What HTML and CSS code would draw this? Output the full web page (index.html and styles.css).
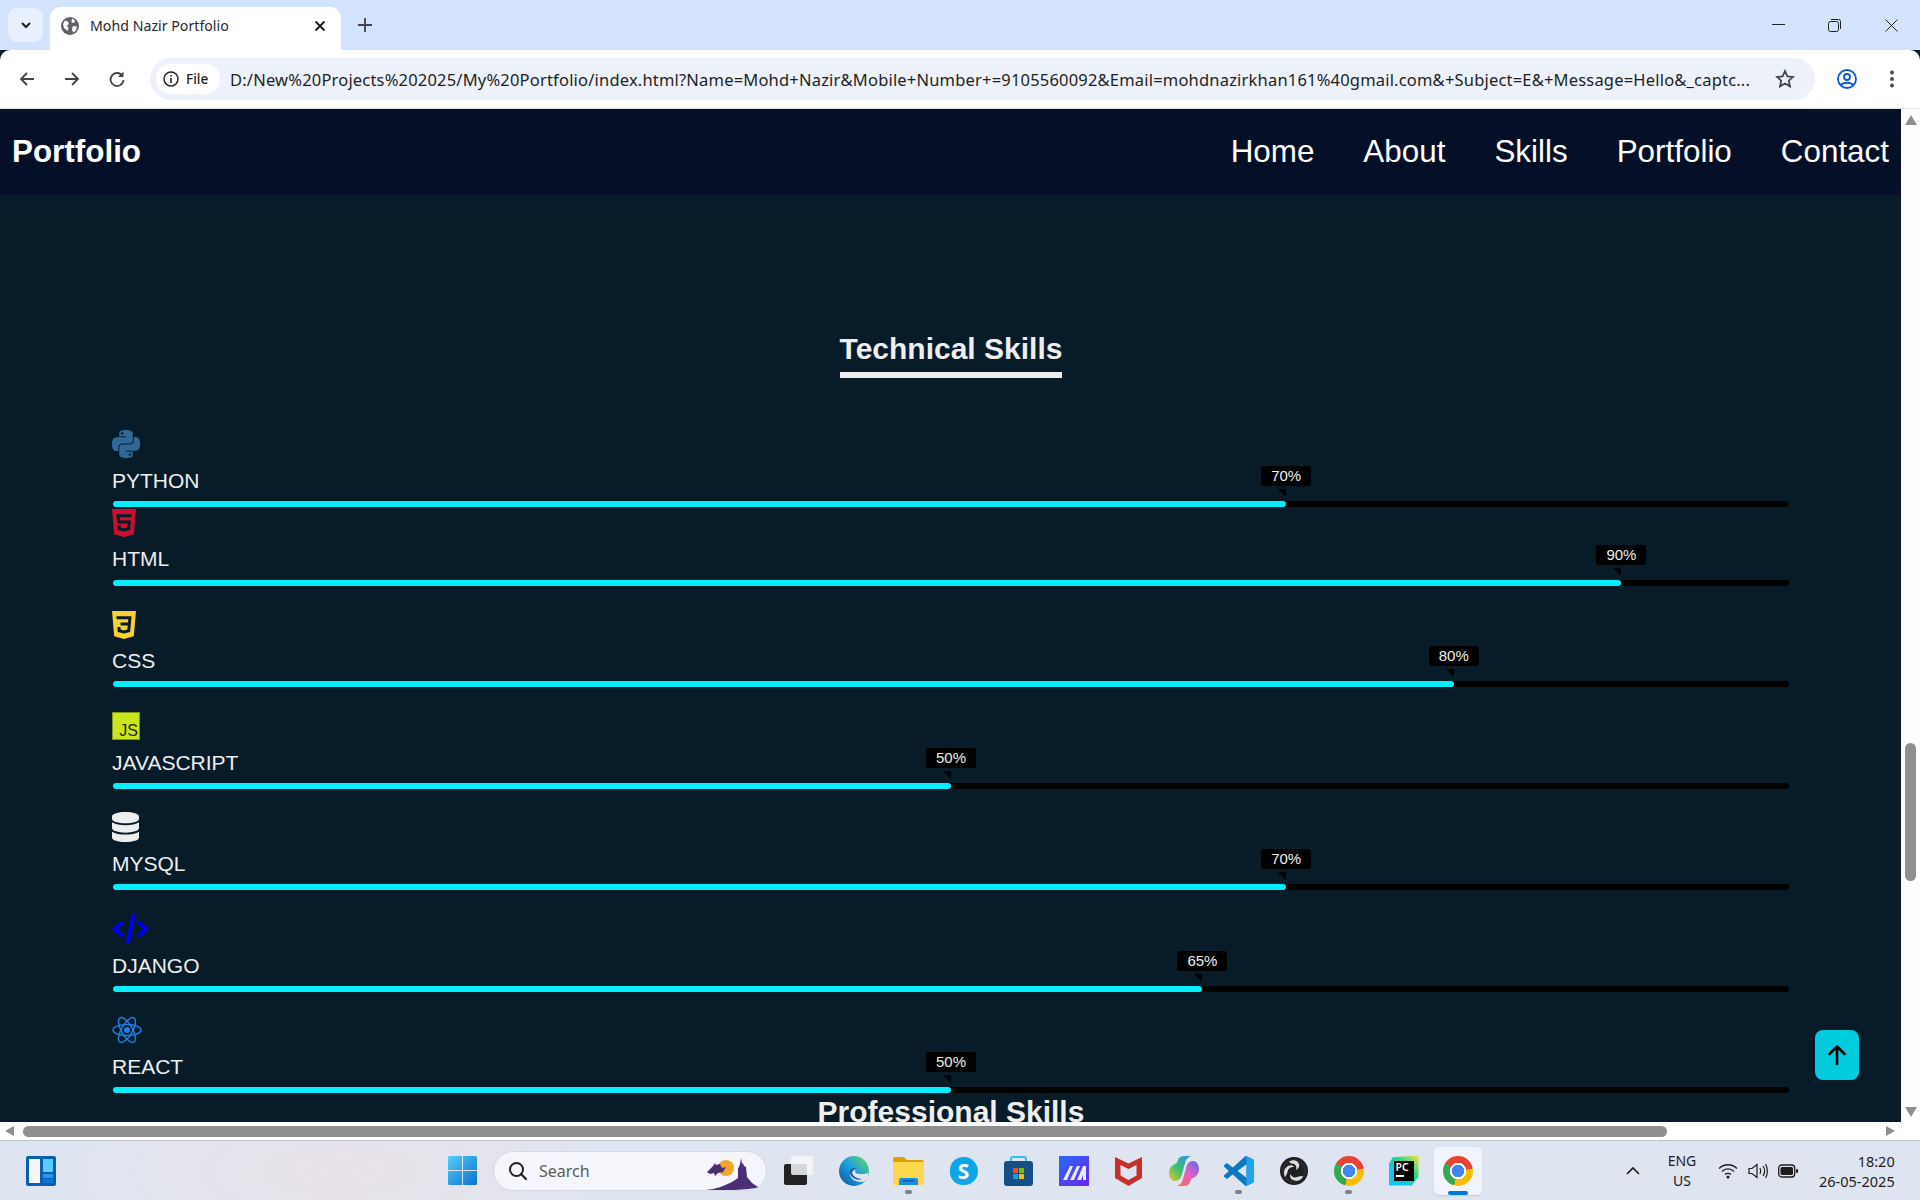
FILE: index.html
```html
<!DOCTYPE html>
<html lang="en">
  <head>
    <meta charset="UTF-8" />
    <meta name="viewport" content="width=device-width, initial-scale=1.0" />
    <title>Mohd Nazir Portfolio</title>
    <link rel="stylesheet" href="styles.css">
  </head>
  <body>
    <div class="tabstrip">
      <div class="tab-search">
        <svg width="12" height="12" viewBox="0 0 12 12"><path d="M2 4l4 4 4-4" fill="none" stroke="#1f1f1f" stroke-width="2"/></svg>
      </div>
      <div class="tab">
        <svg class="tab-favicon" width="18" height="18" viewBox="0 0 18 18">
          <circle cx="9" cy="9" r="9" fill="#5f6368"/>
          <path d="M4 3.500l3 1 1 2.500-2 1.500 1.500 2.500-1 3-3.500-3-1-4zM11 1.500l3 2-1 2.500-2.500-.5zM12 9l4 .5-1.500 4.500-2.500 1.500-1-3.500z" fill="#fff"/>
        </svg>
        <span class="tab-title">Mohd Nazir Portfolio</span>
        <svg class="tab-close" width="12" height="12" viewBox="0 0 12 12"><path d="M1.500 1.500l9 9M10.500 1.500l-9 9" stroke="#1f1f1f" stroke-width="2"/></svg>
      </div>
      <svg class="tab-new" width="14" height="14" viewBox="0 0 14 14"><path d="M7 0v14M0 7h14" stroke="#444" stroke-width="1.800"/></svg>
      <div class="window-controls">
        <svg width="13" height="13" viewBox="0 0 13 13"><path d="M0 5.500h13" stroke="#222" stroke-width="1"/></svg>
        <svg width="13" height="13" viewBox="0 0 13 13"><rect x=".5" y="2.500" width="10" height="10" rx="2" fill="none" stroke="#222"/><path d="M3 .5h7.500a2 2 0 0 1 2 2V10" fill="none" stroke="#222"/></svg>
        <svg width="13" height="13" viewBox="0 0 13 13"><path d="M.5.5l12 12M12.500.5l-12 12" stroke="#222" stroke-width="1"/></svg>
      </div>
    </div>

    <div class="toolbar">
      <svg class="tool-icon" width="18" height="18" viewBox="0 0 18 18"><path d="M16 9H3M9 3L3 9l6 6" fill="none" stroke="#444" stroke-width="1.800"/></svg>
      <svg class="tool-icon" width="18" height="18" viewBox="0 0 18 18"><path d="M2 9h13M9 3l6 6-6 6" fill="none" stroke="#444" stroke-width="1.800"/></svg>
      <svg class="tool-icon" width="18" height="18" viewBox="0 0 18 18"><path d="M14.500 6A6.500 6.500 0 1 0 15.500 10" fill="none" stroke="#444" stroke-width="1.800"/><path d="M15.500 1.500v5.500H10z" fill="#444"/></svg>
      <div class="omnibox">
        <div class="file-chip">
          <svg width="16" height="16" viewBox="0 0 16 16"><circle cx="8" cy="8" r="7" fill="none" stroke="#222" stroke-width="1.500"/><path d="M8 7v5M8 4v1.600" stroke="#222" stroke-width="1.600"/></svg>
          <span>File</span>
        </div>
        <div class="url">D:/New%20Projects%202025/My%20Portfolio/index.html?Name=Mohd+Nazir&amp;Mobile+Number+=9105560092&amp;Email=mohdnazirkhan161%40gmail.com&amp;+Subject=E&amp;+Message=Hello&amp;_captc...</div>
        <svg class="star" width="20" height="20" viewBox="0 0 20 20"><path d="M10 2l2.400 5.300 5.600.6-4.200 3.800 1.200 5.700-5-2.900-5 2.900 1.200-5.700L2 7.900l5.600-.6z" fill="none" stroke="#444" stroke-width="1.800"/></svg>
      </div>
      <svg class="profile" width="20" height="20" viewBox="0 0 20 20"><circle cx="10" cy="10" r="9" fill="none" stroke="#0b57d0" stroke-width="1.800"/><circle cx="10" cy="8" r="3" fill="none" stroke="#0b57d0" stroke-width="1.800"/><path d="M4 16c2-3 10-3 12 0" fill="none" stroke="#0b57d0" stroke-width="1.800"/></svg>
      <svg class="more" width="6" height="18" viewBox="0 0 6 18"><circle cx="3" cy="2.500" r="1.900" fill="#444"/><circle cx="3" cy="9" r="1.900" fill="#444"/><circle cx="3" cy="15.500" r="1.900" fill="#444"/></svg>
    </div>

    <div class="viewport">
      <div class="page">
        <div class="navbar">
          <div class="logo">Portfolio</div>
          <div class="nav-links">
            <a href="#home">Home</a>
            <a href="#about">About</a>
            <a href="#skills">Skills</a>
            <a href="#portfolio">Portfolio</a>
            <a href="#contact">Contact</a>
          </div>
        </div>

        <div class="skills-section">
          <h2 class="section-title">Technical Skills</h2>

          <div class="skill">
            <svg class="skill-icon icon-python" viewBox="0 0 24 24"><path fill="#306998" d="M14.250.18l.9.2.73.26.59.3.45.32.34.34.25.34.16.33.1.3.04.26.02.2-.01.13V8.500l-.05.63-.13.55-.21.46-.26.38-.3.31-.33.25-.35.19-.35.14-.33.1-.3.07-.26.04-.21.02H8.770l-.69.05-.59.14-.5.22-.41.27-.33.32-.27.35-.2.36-.15.37-.1.35-.07.32-.04.27-.02.21v3.060H3.170l-.21-.03-.28-.07-.32-.12-.35-.18-.36-.26-.36-.36-.35-.46-.32-.59-.28-.73-.21-.88-.14-1.050-.05-1.230.06-1.220.16-1.040.24-.87.32-.71.36-.57.4-.44.42-.33.42-.24.4-.16.36-.1.32-.05.24-.01h.16l.06.01h8.160v-.83H6.180l-.01-2.750-.02-.37.05-.34.11-.31.17-.28.25-.26.31-.23.38-.2.44-.18.51-.15.58-.12.64-.1.71-.06.77-.04.84-.02 1.270.05zm-6.300 1.980l-.23.33-.08.41.08.41.23.34.33.22.41.09.41-.09.33-.22.23-.34.08-.41-.08-.41-.23-.33-.33-.22-.41-.09-.41.09zm13.090 3.950l.28.06.32.12.35.18.36.27.36.35.35.47.32.59.28.73.21.88.14 1.040.05 1.230-.06 1.230-.16 1.040-.24.86-.32.71-.36.57-.4.45-.42.33-.42.24-.4.16-.36.09-.32.05-.24.02-.16-.01h-8.220v.82h5.840l.01 2.760.02.36-.05.34-.11.31-.17.29-.25.25-.31.24-.38.2-.44.17-.51.15-.58.13-.64.09-.71.07-.77.04-.84.01-1.270-.04-1.070-.14-.9-.2-.73-.25-.59-.3-.45-.33-.34-.34-.25-.34-.16-.33-.1-.3-.04-.25-.02-.2.01-.13v-5.340l.05-.64.13-.54.21-.46.26-.38.3-.32.33-.24.35-.2.35-.14.33-.1.3-.06.26-.04.21-.02.13-.01h5.840l.69-.05.59-.14.5-.21.41-.28.33-.32.27-.35.2-.36.15-.36.1-.35.07-.32.04-.28.02-.21V6.070h2.090l.14.01zm-6.470 14.250l-.23.33-.08.41.08.41.23.33.33.23.41.08.41-.08.33-.23.23-.33.08-.41-.08-.41-.23-.33-.33-.23-.41-.08-.41.08z"/></svg>
            <div class="skill-name">PYTHON</div>
            <div class="bar"><div class="bar-fill" style="width: 70%"><span class="bar-tip">70%</span></div></div>
          </div>

          <div class="skill skill-tight">
            <svg class="skill-icon icon-html" viewBox="1.500 0 21 24" preserveAspectRatio="none"><path fill="#c9102f" d="M1.500 0h21l-1.910 21.563L11.977 24l-8.564-2.438L1.500 0zm7.031 9.750l-.232-2.718 10.059.003.23-2.622L5.412 4.410l.698 8.010h9.126l-.326 3.426-2.910.804-2.955-.81-.188-2.110H6.248l.33 4.171L12 19.351l5.379-1.443.744-8.157H8.531z"/></svg>
            <div class="skill-name">HTML</div>
            <div class="bar"><div class="bar-fill" style="width: 90%"><span class="bar-tip">90%</span></div></div>
          </div>

          <div class="skill">
            <svg class="skill-icon icon-css" viewBox="1.500 0 21 24" preserveAspectRatio="none"><path fill="#f9d030" d="M1.500 0h21l-1.910 21.563L11.977 24l-8.565-2.438L1.500 0zm17.090 4.413L5.410 4.410l.213 2.622 10.125.002-.255 2.716h-6.640l.24 2.573h6.182l-.366 3.523-2.910.804-2.956-.81-.188-2.110h-2.610l.33 4.171L12 19.351l5.379-1.443.744-8.157z"/></svg>
            <div class="skill-name">CSS</div>
            <div class="bar"><div class="bar-fill" style="width: 80%"><span class="bar-tip">80%</span></div></div>
          </div>

          <div class="skill">
            <div class="skill-icon icon-js"><span>JS</span></div>
            <div class="skill-name">JAVASCRIPT</div>
            <div class="bar"><div class="bar-fill" style="width: 50%"><span class="bar-tip">50%</span></div></div>
          </div>

          <div class="skill">
            <svg class="skill-icon icon-db" viewBox="0 0 448 512" preserveAspectRatio="none"><path fill="#eee" d="M448 73.143v45.714C448 159.143 347.667 192 224 192S0 159.143 0 118.857V73.143C0 32.857 100.333 0 224 0s224 32.857 224 73.143zM448 176v102.857C448 319.143 347.667 352 224 352S0 319.143 0 278.857V176c48.125 33.143 136.208 48.572 224 48.572S399.874 209.143 448 176zm0 160v102.857C448 479.143 347.667 512 224 512S0 479.143 0 438.857V336c48.125 33.143 136.208 48.572 224 48.572S399.874 369.143 448 336z"/></svg>
            <div class="skill-name">MYSQL</div>
            <div class="bar"><div class="bar-fill" style="width: 70%"><span class="bar-tip">70%</span></div></div>
          </div>

          <div class="skill">
            <svg class="skill-icon icon-code" viewBox="0 0 37 30"><path d="M10 9l-7.500 6 7.500 6M27 9l7.500 6-7.500 6M21.500 2l-5.500 26" fill="none" stroke="#0000f5" stroke-width="4" stroke-linecap="round" stroke-linejoin="round"/></svg>
            <div class="skill-name">DJANGO</div>
            <div class="bar"><div class="bar-fill" style="width: 65%"><span class="bar-tip">65%</span></div></div>
          </div>

          <div class="skill">
            <svg class="skill-icon icon-react" viewBox="0 0 30 28"><g fill="none" stroke="#1a80e5" stroke-width="1.500"><ellipse cx="15" cy="14" rx="14" ry="5.500"/><ellipse cx="15" cy="14" rx="14" ry="5.500" transform="rotate(60 15 14)"/><ellipse cx="15" cy="14" rx="14" ry="5.500" transform="rotate(120 15 14)"/></g><circle cx="15" cy="14" r="3" fill="#1a80e5"/></svg>
            <div class="skill-name">REACT</div>
            <div class="bar"><div class="bar-fill" style="width: 50%"><span class="bar-tip">50%</span></div></div>
          </div>

          <h2 class="next-title">Professional Skills</h2>
        </div>

        <a class="back-top" href="#home">
          <svg width="20" height="22" viewBox="0 0 20 22"><path d="M10 20V3M2.500 10L10 2.500l7.500 7.500" fill="none" stroke="#000" stroke-width="2.600" stroke-linecap="round" stroke-linejoin="round"/></svg>
        </a>
      </div>

      <div class="vscroll">
        <div class="arrow-up"></div>
        <div class="vthumb"></div>
        <div class="arrow-down"></div>
      </div>
    </div>

    <div class="hscroll">
      <div class="arrow-left"></div>
      <div class="hthumb"></div>
      <div class="arrow-right"></div>
    </div>

    <div class="taskbar">
      <svg class="widgets" width="30" height="30" viewBox="0 0 30 30"><rect width="30" height="30" rx="2" fill="#0a5fb4"/><rect x="3" y="3" width="11" height="24" fill="#f4f6fa"/><rect x="17" y="3" width="10" height="13" fill="#56cdfb"/><rect x="17" y="18" width="10" height="4" fill="#1b9de8"/><rect x="17" y="23" width="10" height="4" fill="#0d74d1"/></svg>

      <svg class="win-logo" width="29" height="29" viewBox="0 0 29 29">
        <defs><linearGradient id="winblue" x1="0" y1="0" x2="1" y2="1"><stop offset="0" stop-color="#52cffb"/><stop offset="1" stop-color="#0a6fd0"/></linearGradient></defs>
        <path d="M0 1.500A1.500 1.500 0 0 1 1.500 0H14v14H0zM15 0h12.500A1.500 1.500 0 0 1 29 1.500V14H15zM0 15h14v14H1.500A1.500 1.500 0 0 1 0 27.500zM15 15h14v12.500a1.500 1.500 0 0 1-1.500 1.500H15z" fill="url(#winblue)"/>
      </svg>

      <div class="task-search">
        <svg width="20" height="20" viewBox="0 0 20 20"><circle cx="8.500" cy="8.500" r="6.500" fill="none" stroke="#222" stroke-width="2"/><path d="M13 13l5 5" stroke="#222" stroke-width="2.200" stroke-linecap="round"/></svg>
        <span>Search</span>
        <svg class="search-art" width="52" height="34" viewBox="0 0 52 34">
          <path d="M0 33c10-1 18-4 26-8l6-4V12l2-5 1-6 1 6 1-1 1 3 2 1 1 10 5 6 6 4c-3 2-14 2-24 3z" fill="#4b2e73"/>
          <circle cx="20" cy="11" r="8" fill="#f0a62f"/>
          <path d="M1 15l6-6 2-3 1 2 4-1 2 4 4-1-3 5-5 1-3 3-1-3-4 1z" fill="#4b2e73"/>
        </svg>
      </div>

      <div class="task-apps">
        <div class="task-slot">
          <svg width="29" height="29" viewBox="0 0 29 29"><rect y="8" width="23" height="21" rx="2" fill="#222"/><rect x="7" width="22" height="19" rx="2" fill="#f6f7f9" fill-opacity=".85"/></svg>
        </div>
        <div class="task-slot">
          <svg width="30" height="30" viewBox="0 0 30 30">
            <defs><linearGradient id="edge" x1="0" y1="1" x2="1" y2="0"><stop offset="0" stop-color="#0b53a0"/><stop offset=".5" stop-color="#1b9de2"/><stop offset="1" stop-color="#6fdc5a"/></linearGradient></defs>
            <circle cx="15" cy="15" r="15" fill="url(#edge)"/>
            <path d="M29 17c-1 1-6 1-9 1-2 0-4-1-4-3 0-1 1-2 3-2-4-1-8 1-8 5 0 5 6 8 11 8 3 0 6-2 7-5z" fill="#dfe5f0"/>
            <path d="M19 13c-3 0-5 1-6 3 0 4 5 7 10 7-5 2-11-1-12-6-.5-4 4-6 8-4z" fill="#0d5aa7"/>
          </svg>
        </div>
        <div class="task-slot">
          <svg width="31" height="28" viewBox="0 0 31 28"><path d="M0 2a2 2 0 0 1 2-2h9l3 3h15a2 2 0 0 1 2 2v3H0z" fill="#e0a100"/><path d="M0 5h31v21a2 2 0 0 1-2 2H2a2 2 0 0 1-2-2z" fill="#fdd74f"/><path d="M6 23a2 2 0 0 1 2-2h15a2 2 0 0 1 2 2v5H6z" fill="#1a8de0"/><rect x="10" y="23" width="11" height="1.500" fill="#0b5cab"/></svg>
          <i class="task-dot"></i>
        </div>
        <div class="task-slot">
          <div class="skype-logo"><span>S</span></div>
        </div>
        <div class="task-slot">
          <svg width="29" height="30" viewBox="0 0 29 30"><path d="M7 6V3a2 2 0 0 1 2-2h11a2 2 0 0 1 2 2v3" fill="none" stroke="#2bc0ef" stroke-width="2"/><path d="M0 8a3 3 0 0 1 3-3h23a3 3 0 0 1 3 3v19a3 3 0 0 1-3 3H3a3 3 0 0 1-3-3z" fill="#144f85"/><rect x="9" y="12" width="5" height="5" fill="#f25022"/><rect x="15" y="12" width="5" height="5" fill="#7fba00"/><rect x="9" y="18" width="5" height="5" fill="#00a4ef"/><rect x="15" y="18" width="5" height="5" fill="#ffb900"/></svg>
        </div>
        <div class="task-slot">
          <svg width="30" height="30" viewBox="0 0 30 30">
            <defs><linearGradient id="mapp" x1="0" y1="0" x2="1" y2="1"><stop offset="0" stop-color="#2a6cf5"/><stop offset="1" stop-color="#6a22f0"/></linearGradient></defs>
            <rect width="30" height="30" fill="url(#mapp)"/>
            <path d="M4 24L11 10h3L8 24zM11 24l7-14h3l-6 14zM18 24l6-14h3v14h-3v-5l-2 5z" fill="#e8ebfb"/>
          </svg>
        </div>
        <div class="task-slot">
          <svg width="27" height="30" viewBox="0 0 27 30"><path d="M0 1l13.500 6.500L27 1v21l-13.500 8L0 22zM5.500 9v10.500l8 4.500 8-4.500V9l-8 4z" fill="#c5302b" fill-rule="evenodd"/></svg>
        </div>
        <div class="task-slot">
          <svg width="30" height="30" viewBox="0 0 30 30">
            <defs>
              <linearGradient id="cop1" x1="0" y1="1" x2="1" y2="0"><stop offset="0" stop-color="#f6c02d"/><stop offset=".45" stop-color="#39c36f"/><stop offset="1" stop-color="#2c8fe8"/></linearGradient>
              <linearGradient id="cop2" x1="0" y1="1" x2="1" y2="0"><stop offset="0" stop-color="#f5723a"/><stop offset=".5" stop-color="#e45fc0"/><stop offset="1" stop-color="#5b6be8"/></linearGradient>
            </defs>
            <path d="M21 26c-1 3-3 4-6 4H8c3-1 5-3 6-7l3-11c1-4 3-7 7-7h1c3 1 5 4 5 8 0 5-3 8-6 9-2 1-2 2-3 4z" fill="url(#cop2)"/>
            <path d="M9 4c1-3 3-4 6-4h7c-3 1-5 3-6 7l-3 11c-1 4-3 7-7 7H5c-3-1-5-4-5-8 0-5 3-8 6-9 2-1 2-2 3-4z" fill="url(#cop1)"/>
          </svg>
        </div>
        <div class="task-slot">
          <svg width="30" height="30" viewBox="0 0 24 24"><path fill="#0a78c2" d="M23.150 2.587L18.210.21a1.494 1.494 0 0 0-1.705.29l-9.460 8.630-4.120-3.128a.999.999 0 0 0-1.276.057L.327 7.261A1 1 0 0 0 .326 8.740L3.899 12 .326 15.260a1 1 0 0 0 .001 1.479L1.650 17.940a.999.999 0 0 0 1.276.057l4.120-3.128 9.460 8.630a1.492 1.492 0 0 0 1.704.29l4.942-2.377A1.500 1.500 0 0 0 24 20.060V3.939a1.500 1.500 0 0 0-.85-1.352zm-5.146 14.861L10.826 12l7.178-5.448v10.896z"/><path fill="#22a3ee" d="M16.500.5a1.494 1.494 0 0 1 1.710-.29l4.940 2.377A1.500 1.500 0 0 1 24 3.939V20.060a1.500 1.500 0 0 1-.85 1.353l-4.940 2.377a1.492 1.492 0 0 1-1.710-.29c.6.3 1.500 0 1.500-.8V1.300c0-.8-.9-1.100-1.500-.8z"/></svg>
          <i class="task-dot"></i>
        </div>
        <div class="task-slot">
          <svg width="28" height="28" viewBox="0 0 28 28"><circle cx="14" cy="14" r="14" fill="#1f1f22"/><circle cx="14" cy="14" r="11" fill="none" stroke="#2c2c30" stroke-width="2"/><g fill="#dcdcdc"><path d="M9 5c3-3 9-2 10 2 1 3-1 5-3 6 1-3 0-5-2-6-2-.5-3 0-5-2z"/><path d="M23 19c-1 4-6 6-10 4-3-1-3-4-3-6 2 3 4 4 7 3 2-.5 4-1 6-1z"/><path d="M5 20c-2-4-1-9 3-11 2-1 5-1 6 1-3-.5-5 1-6 3-.5 2-1 5-3 7z"/></g></svg>
        </div>
        <div class="task-slot">
          <div class="chrome-logo"></div>
          <i class="task-dot"></i>
        </div>
        <div class="task-slot">
          <div class="pycharm-logo"><div class="pycharm-inner"><span>PC</span><i></i></div></div>
        </div>
        <div class="task-slot task-slot-active">
          <div class="chrome-logo"></div>
          <i class="task-active-bar"></i>
        </div>
      </div>

      <div class="tray">
        <svg class="tray-caret" width="16" height="10" viewBox="0 0 16 10"><path d="M2 8l6-6 6 6" fill="none" stroke="#1c1c1c" stroke-width="1.600"/></svg>
        <div class="tray-lang">ENG<br>US</div>
        <svg class="tray-icon" width="20" height="16" viewBox="0 0 20 16"><path d="M1 5.500c5-5 13-5 18 0M4 8.500c3.500-3.500 8.500-3.500 12 0M7 11.500c1.500-1.500 4.500-1.500 6 0" fill="none" stroke="#1c1c1c" stroke-width="1.300"/><circle cx="10" cy="14" r="1.500" fill="#1c1c1c"/></svg>
        <svg class="tray-icon" width="20" height="16" viewBox="0 0 20 16"><path d="M1 5.500h3L9 1.500v13L4 10.500H1z" fill="none" stroke="#1c1c1c" stroke-width="1.200"/><path d="M12 5c1 2 1 4 0 6M15 3c2 3 2 7 0 10M17.500 1c2.500 4 2.500 10 0 14" fill="none" stroke="#1c1c1c" stroke-width="1.200"/></svg>
        <svg class="tray-icon" width="20" height="14" viewBox="0 0 20 14"><rect x=".7" y="1" width="16" height="12" rx="3" fill="none" stroke="#1c1c1c" stroke-width="1.300"/><rect x="2.500" y="3" width="12.500" height="8" rx="1.500" fill="#1c1c1c"/><rect x="18" y="5" width="2" height="4" rx="1" fill="#1c1c1c"/></svg>
        <div class="tray-clock">18:20<br>26-05-2025</div>
      </div>
    </div>
  </body>
</html>
```

FILE: styles.css
```css
* {
  margin: 0;
  padding: 0;
  box-sizing: border-box;
}

html,
body {
  height: 100%;
  overflow: hidden;
}

body {
  display: flex;
  flex-direction: column;
  height: 100vh;
  font-family: "Liberation Sans", Arial, sans-serif;
  background-color: #071b29;
}

a {
  text-decoration: none;
  color: inherit;
}

/* browser chrome */
.tabstrip {
  height: 50px;
  flex-shrink: 0;
  display: flex;
  align-items: flex-end;
  background-color: #d3e3fd;
  font-family: "Noto Sans", sans-serif;
}

.tab-search {
  width: 35px;
  height: 34px;
  margin: 0 7px 8px 8px;
  border-radius: 9px;
  background-color: #e9f0fd;
  display: flex;
  align-items: center;
  justify-content: center;
}

.tab {
  width: 291px;
  height: 43px;
  border-radius: 11px 11px 0 0;
  background-color: #fff;
  display: flex;
  align-items: center;
  padding: 0 15px 6px 11px;
  position: relative;
}

.tab-favicon {
  margin-right: 11px;
}

.tab-title {
  flex: 1;
  font-size: 14.2px;
  color: #2a2a2a;
}

.tab-new {
  margin: 0 0 18px 17px;
}

.window-controls {
  margin-left: auto;
  height: 50px;
  display: flex;
  align-items: center;
  gap: 43.7px;
  padding-right: 22px;
}

.toolbar {
  height: 59px;
  flex-shrink: 0;
  display: flex;
  align-items: center;
  padding-left: 18px;
  background-color: #fff;
  border-radius: 10px 10px 0 0;
  border-bottom: 1px solid #e2e2e2;
  font-family: "Noto Sans", sans-serif;
}

.tool-icon {
  margin-right: 27px;
}

.omnibox {
  width: 1665px;
  height: 42px;
  margin-left: -3px;
  display: flex;
  align-items: center;
  padding-left: 6px;
  border-radius: 21px;
  background-color: #edf2fa;
}

.file-chip {
  width: 64px;
  height: 30px;
  flex-shrink: 0;
  display: flex;
  align-items: center;
  gap: 7px;
  padding-left: 7px;
  border-radius: 15px;
  background-color: #fff;
  font-size: 13.5px;
  font-weight: 500;
  color: #1f1f1f;
}

.url {
  margin-left: 10px;
  flex: 1;
  white-space: nowrap;
  overflow: hidden;
  font-size: 16.5px;
  letter-spacing: 0.19px;
  color: #1f1f1f;
}

.star {
  margin: 0 20px 0 24px;
  flex-shrink: 0;
}

.profile {
  margin-left: 22px;
}

.more {
  margin-left: 32px;
}

/* page */
.viewport {
  flex: 1;
  display: flex;
  min-height: 0;
}

.page {
  flex: 1;
  position: relative;
  overflow: hidden;
  background-color: #071b29;
}

.navbar {
  height: 86px;
  display: flex;
  align-items: center;
  justify-content: space-between;
  padding: 0 10px 0 12px;
  background-color: #051028;
  color: #fff;
}

.logo {
  font-size: 31.4px;
  font-weight: 700;
}

.nav-links {
  display: flex;
  gap: 49px;
  padding-right: 2px;
  font-size: 31.4px;
}

.skills-section {
  padding: 137px 112px 0 113px;
  color: #eee;
}

.section-title {
  width: fit-content;
  margin: 0 auto 52px;
  padding-bottom: 6px;
  border-bottom: 6px solid #eee;
  font-size: 30px;
}

.skill {
  display: flow-root;
  margin-top: 24.4px;
}

.section-title + .skill {
  margin-top: 0;
}

.skill-tight {
  margin-top: 2px;
}

.skill-icon {
  display: block;
  height: 28px;
  margin-bottom: 11px;
}

.icon-python {
  width: 28px;
  margin-left: -1px;
}

.icon-html {
  width: 24px;
  margin: 0 0 10px -1px;
}

.skill-tight .skill-name {
  margin-bottom: 9px;
}

.icon-css {
  width: 24px;
  margin: 1px 0 10px -1px;
}

.icon-js {
  width: 28px;
  margin-left: -1px;
  display: flex;
  align-items: flex-end;
  justify-content: flex-end;
  padding-right: 1px;
  background-color: #c9e620;
  border: 1px solid #7f9a10;
  color: #1f2808;
  font-size: 16px;
  line-height: 17px;
}

.icon-db {
  width: 27px;
  height: 30px;
  margin: -1px 0 10px -1px;
}

.icon-code {
  width: 37px;
  height: 30px;
  margin: -1px 0 10px -1px;
}

.icon-react {
  width: 30px;
  margin-left: -1px;
}

.skill-name {
  height: 24px;
  margin-left: -1px;
  font-size: 21px;
  line-height: 24px;
  margin-bottom: 8px;
}

.bar {
  height: 6px;
  border-radius: 3px;
  background-color: #000;
}

.bar-fill {
  position: relative;
  height: 100%;
  border-radius: 3px;
  background-color: #00f0ff;
}

.bar-tip {
  position: absolute;
  top: -35px;
  right: -25px;
  width: 50px;
  height: 20px;
  border-radius: 3px;
  background-color: #000;
  color: #eee;
  font-size: 15px;
  line-height: 19px;
  text-align: center;
}

.bar-tip::after {
  content: "";
  position: absolute;
  top: 23px;
  right: 25px;
  border-top: 8px solid #000;
  border-left: 8px solid transparent;
}

.next-title {
  margin-top: 1px;
  text-align: center;
  font-size: 30px;
  line-height: 35px;
}

.back-top {
  position: absolute;
  left: 1815px;
  top: 921px;
  width: 44px;
  height: 50px;
  border-radius: 8px;
  background-color: #00ccde;
  display: flex;
  align-items: center;
  justify-content: center;
}

/* scrollbars */
.vscroll {
  width: 19px;
  display: flex;
  flex-direction: column;
  align-items: center;
  background-color: #fdfdfd;
}

.arrow-up {
  margin-top: 6px;
  border-left: 6.5px solid transparent;
  border-right: 6.5px solid transparent;
  border-bottom: 10px solid #8f8f8f;
}

.vthumb {
  width: 11px;
  height: 138px;
  margin-top: 618px;
  border-radius: 6px;
  background-color: #8f8f8f;
}

.arrow-down {
  margin-top: auto;
  margin-bottom: 5px;
  border-left: 6.5px solid transparent;
  border-right: 6.5px solid transparent;
  border-top: 10px solid #8f8f8f;
}

.hscroll {
  height: 18px;
  flex-shrink: 0;
  display: flex;
  align-items: center;
  padding-left: 5px;
  background-color: #fff;
}

.arrow-left {
  border-top: 5.5px solid transparent;
  border-bottom: 5.5px solid transparent;
  border-right: 9px solid #8f8f8f;
}

.hthumb {
  width: 1644px;
  height: 11px;
  margin-left: 9px;
  border-radius: 6px;
  background-color: #8f8f8f;
}

.arrow-right {
  margin-left: 219px;
  border-top: 5.5px solid transparent;
  border-bottom: 5.5px solid transparent;
  border-left: 9px solid #8f8f8f;
}

/* taskbar */
.taskbar {
  height: 60px;
  flex-shrink: 0;
  display: flex;
  align-items: center;
  padding-left: 26px;
  border-top: 1px solid #bfc2c9;
  background: radial-gradient(ellipse 260px 90px at 340px 50%, #e9e1e7, transparent), #dfe5f0;
  font-family: "Noto Sans", sans-serif;
  color: #1c1c1c;
}

.win-logo {
  margin-left: 392px;
}

.task-search {
  width: 274px;
  height: 40px;
  margin-left: 16px;
  display: flex;
  align-items: center;
  padding-left: 14px;
  border: 1px solid #d5d8e3;
  border-radius: 20px;
  background-color: #f4f6fb;
  font-size: 16px;
  color: #5c5c5c;
}

.task-search span {
  margin-left: 11px;
}

.search-art {
  margin: 6px 8px 0 auto;
}

.task-apps {
  display: flex;
  margin-left: 4px;
}

.task-slot {
  width: 55px;
  height: 48px;
  position: relative;
  display: flex;
  align-items: center;
  justify-content: center;
}

.task-slot-active {
  width: 48px;
  margin-left: 3px;
  border-radius: 5px;
  background-color: #f1f4fa;
  box-shadow: 0 1px 1px rgba(0, 0, 0, 0.12);
}

.task-dot {
  position: absolute;
  left: 24px;
  bottom: 1px;
  width: 7px;
  height: 4px;
  border-radius: 2px;
  background-color: #7a7f88;
}

.task-active-bar {
  position: absolute;
  left: 14px;
  bottom: 0;
  width: 20px;
  height: 4px;
  border-radius: 2px;
  background-color: #0078d4;
}

.skype-logo {
  width: 28px;
  height: 28px;
  display: flex;
  align-items: center;
  justify-content: center;
  border-radius: 48% 52% 50% 46%;
  background-color: #0ea5e9;
  color: #fff;
  font-size: 21px;
  font-weight: 700;
}

.chrome-logo {
  width: 30px;
  height: 30px;
  border-radius: 50%;
  background:
    radial-gradient(circle, #4285f4 0 6px, #fff 6.500px 8px, transparent 8.500px),
    conic-gradient(#ea4335 0 80deg, #fbbc04 80deg 195deg, #34a853 195deg 300deg, #ea4335 300deg);
}

.pycharm-logo {
  width: 30px;
  height: 30px;
  padding: 5px;
  clip-path: polygon(14% 6%, 100% 0, 100% 70%, 78% 100%, 0 100%, 0 30%);
  background: linear-gradient(45deg, #10c5ee 30%, #21d789 60%, #f5e23a);
}

.pycharm-inner {
  width: 20px;
  height: 20px;
  padding: 1px 2px;
  background-color: #000;
  color: #fff;
  font-size: 10.5px;
  font-weight: 600;
  line-height: 11px;
}

.pycharm-inner span {
  display: block;
}

.pycharm-inner i {
  display: block;
  width: 8px;
  height: 2px;
  margin-top: 2px;
  background-color: #fff;
}

.tray {
  display: flex;
  align-items: center;
  margin-left: 143px;
}

.tray-caret {
  flex-shrink: 0;
}

.tray-lang {
  width: 46px;
  margin-left: 18px;
  text-align: center;
  font-size: 14px;
  line-height: 20px;
}

.tray-icon {
  margin-left: 10px;
}

.tray-lang + .tray-icon {
  margin-left: 13px;
}

.tray-clock {
  margin-left: 21px;
  text-align: right;
  font-size: 14.5px;
  line-height: 20px;
}
```
